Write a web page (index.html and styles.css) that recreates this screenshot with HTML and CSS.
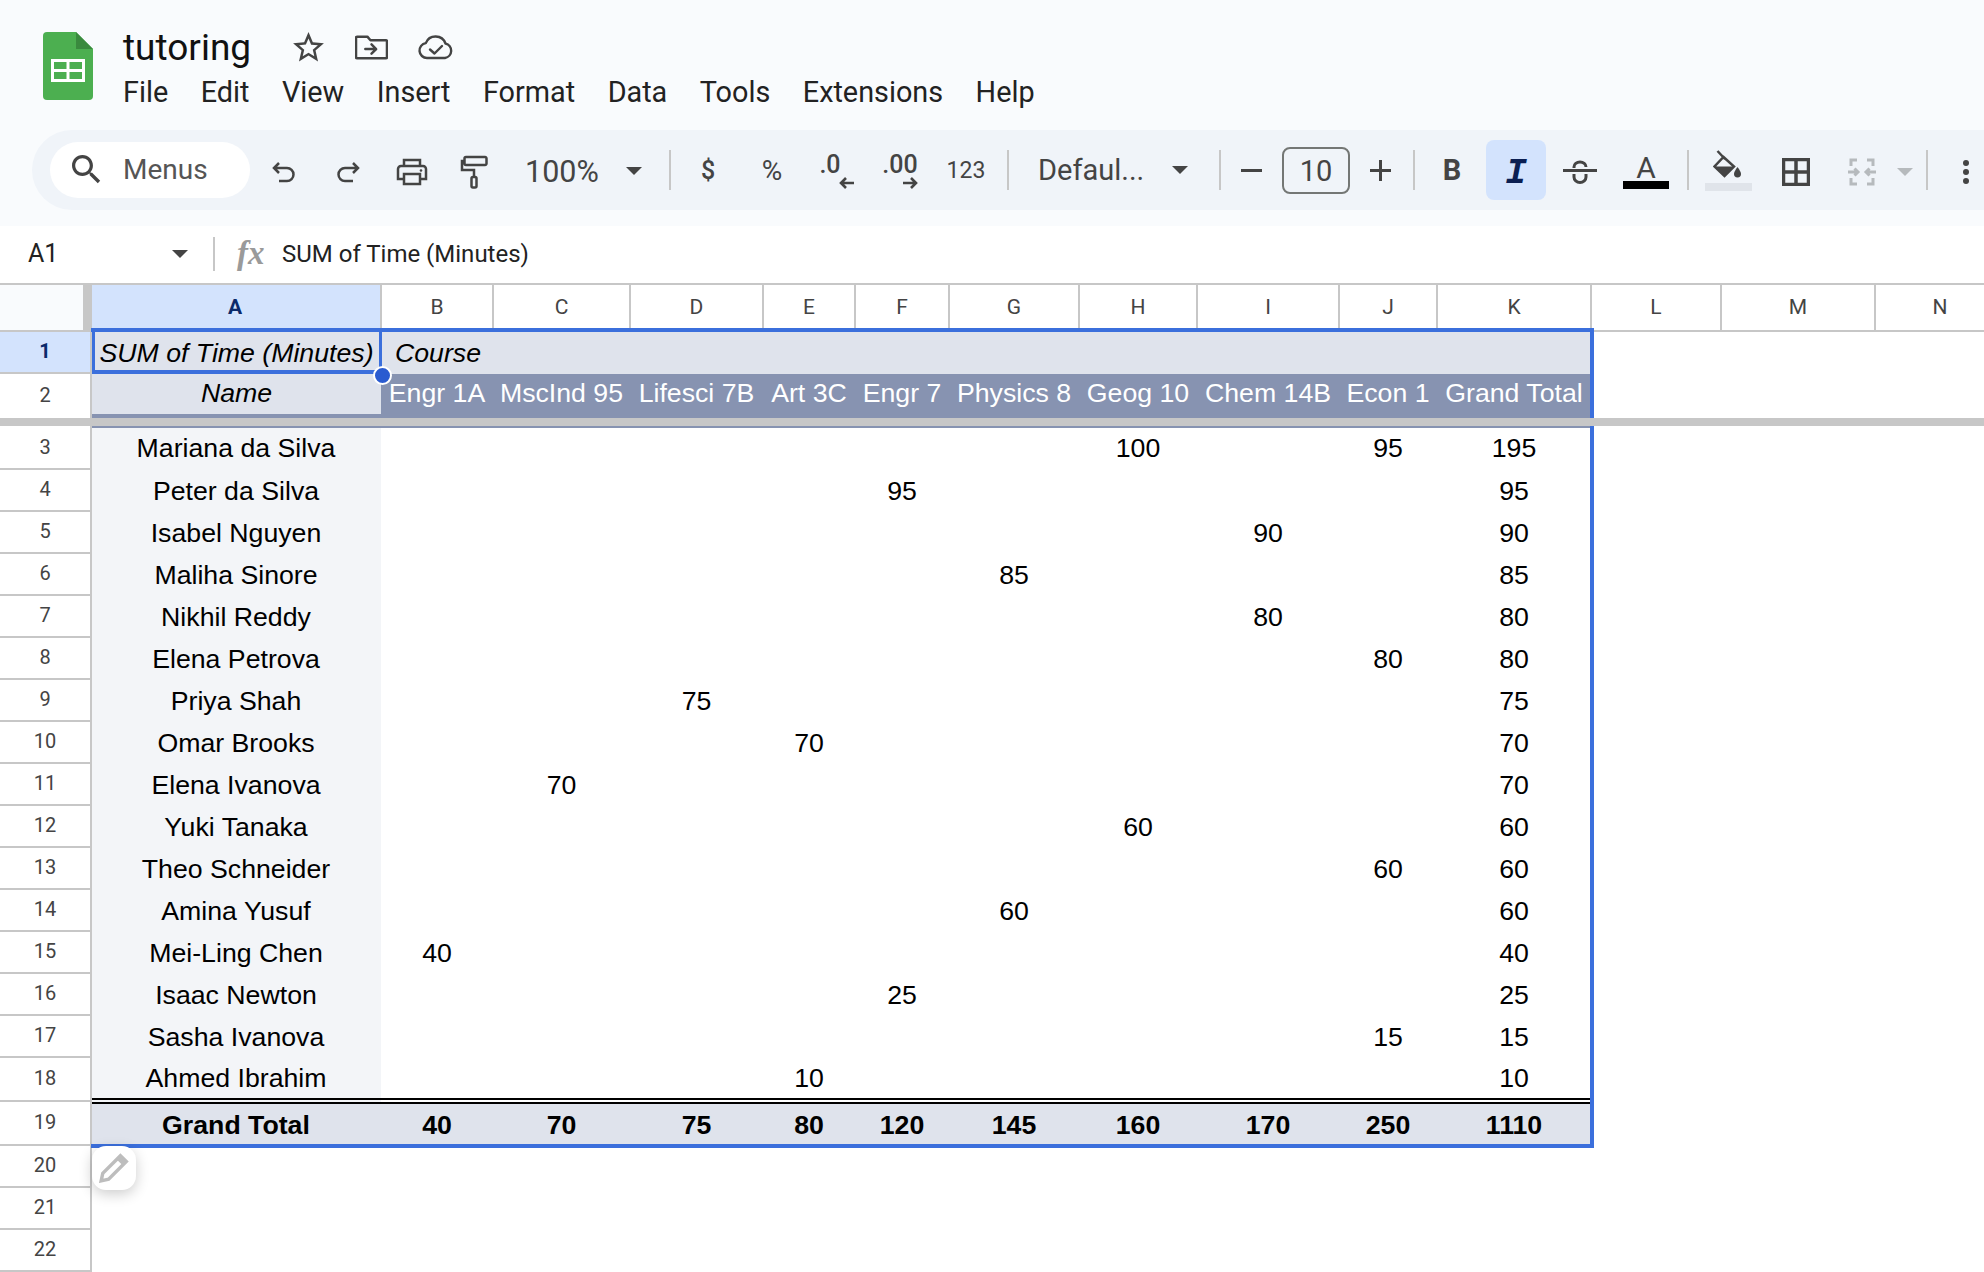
FILE: index.html
```html
<!DOCTYPE html>
<html lang="en">
<head>
<meta charset="UTF-8" />
<meta name="viewport" content="width=device-width, initial-scale=1" />
<title>tutoring - Google Sheets</title>
<link rel="stylesheet" href="styles.css">
</head>
<body>
  <div class="top">
  <header class="app-head">
    <svg class="logo" viewBox="0 0 50 68">
      <path d="M4 0H33L50 17V64a4 4 0 0 1-4 4H4a4 4 0 0 1-4-4V4a4 4 0 0 1 4-4z" fill="#4caf50"/>
      <path d="M33 0L50 17H33z" fill="#3a8a3e"/>
      <path d="M8 27H42V50H8z" fill="#fff"/>
      <path d="M11 30H23.500V37H11zM26.500 30H39V37H26.500zM11 40H23.500V47H11zM26.500 40H39V47H26.500z" fill="#4caf50"/>
    </svg>
    <div class="doc-info">
      <div class="doc-title">
        <span class="doc-name">tutoring</span>
        <svg class="star" viewBox="0 0 24 24"><path d="M22 9.240l-7.190-.62L12 2 9.190 8.630 2 9.240l5.460 4.730L5.820 21 12 17.270 18.180 21l-1.630-7.030L22 9.240zM12 15.400l-3.760 2.270 1-4.280-3.320-2.880 4.380-.38L12 6.100l1.710 4.040 4.380.38-3.320 2.880 1 4.280L12 15.400z"/></svg>
        <svg class="folder" viewBox="0 0 32 24"><path d="M2 22.500a1 1 0 0 1-1-1V2.500a1 1 0 0 1 1-1h10l3 3.500h15a1 1 0 0 1 1 1v15.500a1 1 0 0 1-1 1z"/><path d="M10 13.500h10M16 9l4.500 4.500L16 18"/></svg>
        <svg class="cloud" viewBox="0 0 36 24"><path d="M9 22.500a7.500 7.500 0 0 1-1.200-14.900A10.500 10.500 0 0 1 27.500 8a7.400 7.400 0 0 1-.5 14.500z"/><path d="M12 14l4.500 4 7.500-7.500"/></svg>
      </div>
      <nav class="menu">
        <span>File</span><span>Edit</span><span>View</span><span>Insert</span><span>Format</span><span>Data</span><span>Tools</span><span>Extensions</span><span>Help</span>
      </nav>
    </div>
  </header>

  <div class="toolbar">
    <div class="search">
      <svg viewBox="3 3 18 18"><path d="M15.500 14h-.79l-.28-.27C15.410 12.590 16 11.110 16 9.500 16 5.910 13.090 3 9.500 3S3 5.910 3 9.500 5.910 16 9.500 16c1.610 0 3.090-.59 4.230-1.570l.27.28v.79l5 4.990L20.490 19l-4.990-5zm-6 0C7.010 14 5 11.990 5 9.500S7.010 5 9.500 5 14 7.010 14 9.500 11.990 14 9.500 14z"/></svg>
      <span>Menus</span>
    </div>
    <div class="btn first"><svg class="ico" width="26" height="24" viewBox="0 0 26 24"><path d="M8 3L3 8l5 5M3 8h13a6.500 6.500 0 0 1 0 13H8"/></svg></div>
    <div class="btn"><svg class="ico" width="26" height="24" viewBox="0 0 26 24"><path d="M18 3l5 5-5 5M23 8H10a6.500 6.500 0 0 0 0 13h8"/></svg></div>
    <div class="btn"><svg class="ico" width="32" height="28" viewBox="0 0 32 28"><path d="M8 8V2h16v6M8 21H2V11a3 3 0 0 1 3-3h22a3 3 0 0 1 3 3v10h-6M8 16h16v10H8z"/><circle cx="25" cy="12.500" r="1.300" class="dot"/></svg></div>
    <div class="btn roller"><svg class="ico" width="28" height="34" viewBox="0 0 28 34"><path d="M6 2h19a1.500 1.500 0 0 1 1.500 1.500v5A1.500 1.500 0 0 1 25 10H6a1.500 1.500 0 0 1-1.500-1.500v-5A1.500 1.500 0 0 1 6 2zM4.500 6H2v9h12v6"/><rect x="11.500" y="22" width="5" height="10.500" rx="1.500"/></svg></div>
    <div class="zoom-box"><span>100%</span><i class="caret"></i></div>
    <div class="sep"></div>
    <div class="btn dollar"><span class="sym bold">$</span></div>
    <div class="btn"><span class="sym pct">%</span></div>
    <div class="btn">
      <span class="dec less">.0<svg class="arrow" viewBox="0 0 16 12"><path d="M15 6H2M7 1L2 6l5 5"/></svg></span>
    </div>
    <div class="btn">
      <span class="dec more">.00<svg class="arrow" viewBox="0 0 16 12"><path d="M1 6h13M9 1l5 5-5 5"/></svg></span>
    </div>
    <div class="btn fmt"><span class="sym small">123</span></div>
    <div class="sep"></div>
    <div class="font-box"><span>Defaul...</span><i class="caret"></i></div>
    <div class="sep"></div>
    <div class="step"><i class="minus"></i></div>
    <div class="size-box">10</div>
    <div class="step plus-wrap"><i class="minus"></i><i class="minus upright"></i></div>
    <div class="sep"></div>
    <div class="btn gap-b"><span class="letter-b">B</span></div>
    <div class="btn active"><span class="letter-i">I</span></div>
    <div class="btn"><svg class="ico strike" width="34" height="24" viewBox="0 0 34 24"><path d="M0 10.500h34M11 8V7a6 5 0 0 1 12 0M11 14v3a6 5.500 0 0 0 12 0v-3"/></svg></div>
    <div class="btn color-a"><span class="letter-a">A</span><i class="bar black"></i></div>
    <div class="sep sep-a"></div>
    <div class="fill-box">
      <svg viewBox="0 0 28 28"><path class="bucket" d="M10.500 7L21 16.500 11.500 26 1.500 16.500zM4.500 1L12 9"/><path d="M1.500 16.500H21L11.500 26z"/><path d="M24.500 17s-3.500 4.500-3.500 7a3.500 3.500 0 0 0 7 0c0-2.500-3.500-7-3.500-7z"/></svg>
      <i class="bar pale"></i>
    </div>
    <div class="btn borders"><svg class="ico heavy" width="28" height="28" viewBox="0 0 28 28"><path d="M1.500 1.500h25v25h-25zM14 1.500v25M1.500 14h25"/></svg></div>
    <div class="btn merge"><svg class="ico heavy off" width="30" height="28" viewBox="0 0 30 28"><path d="M10 2H4v6M20 2h6v6M10 26H4v-6M20 26h6v-6M1 14h10M7.500 10.500L11 14l-3.500 3.500M29 14H19M22.500 10.500L19 14l3.500 3.500"/></svg></div>
    <i class="caret off"></i>
    <div class="sep sep-m"></div>
    <div class="kebab"><i></i><i></i><i></i></div>
  </div>
  </div>

  <div class="formula-bar">
    <div class="name-box"><span>A1</span><i class="caret"></i></div>
    <div class="sep short"></div>
    <span class="fx">fx</span>
    <span class="formula">SUM of Time (Minutes)</span>
  </div>

  <div class="sheet">
    <table class="grid">
      <colgroup>
        <col class="c-head"><col class="c-a"><col class="c-b"><col class="c-c"><col class="c-d"><col class="c-e"><col class="c-f"><col class="c-g"><col class="c-h"><col class="c-i"><col class="c-j"><col class="c-k"><col class="c-l"><col class="c-m"><col class="c-n">
      </colgroup>
      <tr class="heads">
        <th class="corner"><i></i></th><th class="on">A</th><th>B</th><th>C</th><th>D</th><th>E</th><th>F</th><th>G</th><th>H</th><th>I</th><th>J</th><th>K</th><th>L</th><th>M</th><th>N</th>
      </tr>
      <tr class="r1">
        <th class="on">1</th><td class="pivot-key">SUM of Time (Minutes)</td><td class="course" colspan="10">Course</td><td class="plain" colspan="3"></td>
      </tr>
      <tr class="r2">
        <th>2</th><td class="pivot-name">Name</td><td>Engr 1A</td><td>MscInd 95</td><td>Lifesci 7B</td><td>Art 3C</td><td>Engr 7</td><td>Physics 8</td><td>Geog 10</td><td>Chem 14B</td><td>Econ 1</td><td>Grand Total</td><td class="plain" colspan="3"></td>
      </tr>
      <tr class="frozen"><td colspan="15"></td></tr>
      <tr class="r3"><th>3</th><td class="name">Mariana da Silva</td><td></td><td></td><td></td><td></td><td></td><td></td><td>100</td><td></td><td>95</td><td>195</td><td colspan="3"></td></tr>
      <tr><th>4</th><td class="name">Peter da Silva</td><td></td><td></td><td></td><td></td><td>95</td><td></td><td></td><td></td><td></td><td>95</td><td colspan="3"></td></tr>
      <tr><th>5</th><td class="name">Isabel Nguyen</td><td></td><td></td><td></td><td></td><td></td><td></td><td></td><td>90</td><td></td><td>90</td><td colspan="3"></td></tr>
      <tr><th>6</th><td class="name">Maliha Sinore</td><td></td><td></td><td></td><td></td><td></td><td>85</td><td></td><td></td><td></td><td>85</td><td colspan="3"></td></tr>
      <tr><th>7</th><td class="name">Nikhil Reddy</td><td></td><td></td><td></td><td></td><td></td><td></td><td></td><td>80</td><td></td><td>80</td><td colspan="3"></td></tr>
      <tr><th>8</th><td class="name">Elena Petrova</td><td></td><td></td><td></td><td></td><td></td><td></td><td></td><td></td><td>80</td><td>80</td><td colspan="3"></td></tr>
      <tr><th>9</th><td class="name">Priya Shah</td><td></td><td></td><td>75</td><td></td><td></td><td></td><td></td><td></td><td></td><td>75</td><td colspan="3"></td></tr>
      <tr><th>10</th><td class="name">Omar Brooks</td><td></td><td></td><td></td><td>70</td><td></td><td></td><td></td><td></td><td></td><td>70</td><td colspan="3"></td></tr>
      <tr><th>11</th><td class="name">Elena Ivanova</td><td></td><td>70</td><td></td><td></td><td></td><td></td><td></td><td></td><td></td><td>70</td><td colspan="3"></td></tr>
      <tr><th>12</th><td class="name">Yuki Tanaka</td><td></td><td></td><td></td><td></td><td></td><td></td><td>60</td><td></td><td></td><td>60</td><td colspan="3"></td></tr>
      <tr><th>13</th><td class="name">Theo Schneider</td><td></td><td></td><td></td><td></td><td></td><td></td><td></td><td></td><td>60</td><td>60</td><td colspan="3"></td></tr>
      <tr><th>14</th><td class="name">Amina Yusuf</td><td></td><td></td><td></td><td></td><td></td><td>60</td><td></td><td></td><td></td><td>60</td><td colspan="3"></td></tr>
      <tr><th>15</th><td class="name">Mei-Ling Chen</td><td>40</td><td></td><td></td><td></td><td></td><td></td><td></td><td></td><td></td><td>40</td><td colspan="3"></td></tr>
      <tr><th>16</th><td class="name">Isaac Newton</td><td></td><td></td><td></td><td></td><td>25</td><td></td><td></td><td></td><td></td><td>25</td><td colspan="3"></td></tr>
      <tr><th>17</th><td class="name">Sasha Ivanova</td><td></td><td></td><td></td><td></td><td></td><td></td><td></td><td></td><td>15</td><td>15</td><td colspan="3"></td></tr>
      <tr class="r18"><th>18</th><td class="name">Ahmed Ibrahim</td><td></td><td></td><td></td><td>10</td><td></td><td></td><td></td><td></td><td></td><td>10</td><td class="plain" colspan="3"></td></tr>
      <tr class="total">
        <th>19</th><td class="name-total">Grand Total</td><td>40</td><td>70</td><td>75</td><td>80</td><td>120</td><td>145</td><td>160</td><td>170</td><td>250</td><td>1110</td><td class="plain" colspan="3"></td>
      </tr>
      <tr><th>20</th><td colspan="14"></td></tr>
      <tr><th>21</th><td colspan="14"></td></tr>
      <tr><th>22</th><td colspan="14"></td></tr>
    </table>

    <!-- selection sits over the cells -->
    <div class="range"></div>
    <div class="active-cell"></div>
    <div class="handle"></div>
    <div class="pencil">
      <svg viewBox="0 0 28 28"><path d="M20 2.500l5.500 5.500L9 24.500l-7 1.500 1.500-7z" fill="none" stroke="#bdbdbd" stroke-width="3.200"/><path d="M20 2.500l5.500 5.500-3.500 3.500L16.500 6z" fill="#bdbdbd"/></svg>
    </div>
  </div>
</body>
</html>
```

FILE: styles.css
```css
* {
  box-sizing: border-box;
}
html, body {
  height: 100%;
}
body {
  margin: 0;
  background: #fff;
  font-family: Roboto, sans-serif;
  color: #444;
  overflow: hidden;
}
i {
  display: block;
}

/* top of the page */
.top {
  height: 226px;
  background: #f9fbfd;
}
.app-head {
  height: 130px;
  display: flex;
  padding: 32px 0 0 43px;
}
.logo {
  width: 50px;
  height: 68px;
  flex: none;
}
.doc-info {
  margin-left: 30px;
  margin-top: 1px;
}
.doc-title {
  display: flex;
  align-items: center;
  height: 36px;
  margin-top: -4px;
}
.doc-name {
  font-size: 37px;
  color: #111;
  width: 167px;
}
.star {
  width: 37px;
  height: 37px;
  fill: #444;
}
.folder, .cloud {
  fill: none;
  stroke: #444;
  stroke-width: 2.400;
  stroke-linejoin: round;
  stroke-linecap: round;
}
.folder {
  width: 33px;
  height: 25px;
  margin-left: 28px;
}
.cloud {
  width: 36px;
  height: 25px;
  margin-left: 30px;
}
.menu {
  display: flex;
  gap: 32.500px;
  margin-top: 9px;
  font-size: 28.800px;
  color: #222;
  line-height: 36px;
}

/* toolbar */
.toolbar {
  height: 80px;
  margin-left: 32px;
  padding-left: 18px;
  background: #f0f4f9;
  border-radius: 40px 0 0 40px;
  display: flex;
  align-items: center;
}
.search {
  width: 200px;
  height: 56px;
  flex: none;
  background: #fff;
  border-radius: 28px;
  display: flex;
  align-items: center;
  padding: 0 0 1px 22px;
  font-size: 28px;
  color: #555;
}
.search svg {
  width: 29px;
  height: 29px;
  fill: #444;
  margin-right: 22px;
}
.btn {
  width: 64px;
  height: 60px;
  flex: none;
  display: flex;
  align-items: center;
  justify-content: center;
  position: relative;
}
.btn.first {
  margin-left: 2px;
}
.btn.roller svg {
  margin-right: 4px;
}
.ico {
  fill: none;
  stroke: #444;
  stroke-width: 2.500;
  margin-top: 4px;
}
.ico.strike {
  stroke-width: 3;
}
.ico.heavy {
  stroke-width: 3.500;
  margin-top: 4px;
}
.ico.off {
  stroke: #b6babd;
  stroke-width: 3;
}
.ico .dot {
  fill: #444;
  stroke: none;
}
.sep {
  width: 2px;
  height: 40px;
  flex: none;
  background: #c7c7c7;
}
.caret {
  width: 0;
  height: 0;
  flex: none;
  border-left: 8px solid transparent;
  border-right: 8px solid transparent;
  border-top: 8px solid #444;
}
.caret.off {
  border-top-color: #b6babd;
  margin-left: 3px;
  margin-top: 4px;
}
.zoom-box {
  width: 161px;
  flex: none;
  display: flex;
  align-items: center;
  padding-left: 17px;
  font-size: 30.500px;
  margin-top: 2px;
}
.zoom-box .caret {
  margin-left: 27px;
  margin-top: -1px;
}
.btn.dollar {
  margin-left: 5px;
}
.sym {
  font-size: 25px;
}
.sym.bold {
  font-weight: 500;
}
.sym.pct {
  font-size: 28px;
}
.sym.small {
  font-size: 23px;
}
.btn.fmt {
  margin: 0 9px 0 2px;
}
.dec {
  position: relative;
  font-size: 25px;
  font-weight: 500;
  margin-top: -12px;
}
.dec.less {
  margin-left: -12px;
}
.dec.more {
  margin-left: 0;
}
.arrow {
  position: absolute;
  top: 27px;
  width: 16px;
  height: 12px;
  fill: none;
  stroke: #444;
  stroke-width: 2.600;
}
.dec.less .arrow {
  right: -14px;
}
.dec.more .arrow {
  right: 0;
}
.font-box {
  width: 210px;
  flex: none;
  display: flex;
  align-items: center;
  padding-left: 29px;
  font-size: 29px;
}
.font-box span {
  width: 134px;
}
.step {
  width: 61px;
  flex: none;
  height: 40px;
  display: flex;
  align-items: center;
  justify-content: center;
  position: relative;
}
.minus {
  width: 21px;
  height: 3px;
  background: #444;
}
.plus-wrap {
  width: 63px;
  padding-right: 3px;
}
.minus.upright {
  position: absolute;
  width: 3px;
  height: 21px;
}
.size-box {
  width: 68px;
  height: 47px;
  flex: none;
  border: 2px solid #747775;
  border-radius: 8px;
  font-size: 29px;
  text-align: center;
  line-height: 44px;
}
.btn.gap-b {
  margin-left: 5px;
}
.letter-b {
  font-size: 29px;
  font-weight: 700;
}
.btn.active {
  width: 60px;
  margin: 0 2px;
  background: #d3e3fd;
  border-radius: 8px;
}
.letter-i {
  font-family: "Liberation Mono", monospace;
  font-size: 36px;
  font-weight: 700;
  font-style: italic;
  color: #0b1f52;
  margin-top: 6px;
}
.btn.color-a {
  margin-left: 2px;
  flex-direction: column;
}
.letter-a {
  font-size: 30px;
  line-height: 26px;
  margin-top: 4px;
}
.bar {
  width: 46px;
  height: 8px;
}
.bar.black {
  background: #000;
}
.bar.pale {
  background: #e0e4ea;
  width: 47px;
  margin-top: 5px;
}
.sep-a {
  margin-left: 9px;
}
.fill-box {
  width: 47px;
  flex: none;
  margin-left: 16px;
  display: flex;
  flex-direction: column;
  align-items: center;
}
.fill-box svg {
  width: 28px;
  height: 28px;
  fill: #444;
  margin-right: 4px;
}
.fill-box .bucket {
  fill: none;
  stroke: #444;
  stroke-width: 2.500;
}
.btn.borders {
  margin-left: 12px;
}
.btn.merge {
  margin-left: 2px;
}
.sep-m {
  margin-left: 13px;
}
.kebab {
  width: 60px;
  flex: none;
  margin-left: 8px;
  display: flex;
  flex-direction: column;
  align-items: center;
  gap: 3px;
  margin-top: 4px;
}
.kebab i {
  width: 6px;
  height: 6px;
  border-radius: 50%;
  background: #444;
}

/* formula bar */
.formula-bar {
  height: 57px;
  background: #fff;
  display: flex;
  align-items: center;
  padding: 0 0 2px 28px;
  color: #222;
}
.name-box {
  width: 185px;
  flex: none;
  display: flex;
  align-items: center;
  font-size: 25px;
}
.name-box span {
  width: 144px;
}
.sep.short {
  height: 34px;
}
.fx {
  font-family: "Liberation Serif", serif;
  font-style: italic;
  font-weight: 700;
  font-size: 33px;
  color: #9a9a9a;
  width: 67px;
  padding-left: 22px;
  flex: none;
}
.formula {
  font-size: 24px;
}

/* sheet */
.sheet {
  position: relative;
  height: 989px;
  overflow: hidden;
}
.grid {
  table-layout: fixed;
  width: 2005px;
  border-collapse: separate;
  border-spacing: 0;
  font-family: "Liberation Sans", Arial, sans-serif;
  font-size: 26.700px;
  color: #000;
}
.c-head { width: 92px; }
.c-a { width: 289px; }
.c-b { width: 112px; }
.c-c { width: 137px; }
.c-d { width: 133px; }
.c-e { width: 92px; }
.c-f { width: 94px; }
.c-g { width: 130px; }
.c-h { width: 118px; }
.c-i { width: 142px; }
.c-j { width: 98px; }
.c-k { width: 154px; }
.c-l { width: 130px; }
.c-m { width: 154px; }
.c-n { width: 130px; }
.grid td, .grid th {
  padding: 0;
  text-align: center;
  white-space: nowrap;
  overflow: hidden;
}
.grid tr {
  height: 42px;
}
.grid th {
  font-family: Roboto, sans-serif;
  font-size: 20px;
  font-weight: 400;
  color: #444;
  padding-bottom: 3px;
  border-right: 2px solid #c7c7c7;
  border-bottom: 2px solid #c7c7c7;
}
.grid th.on {
  background: #d3e3fd;
  color: #0b2a6a;
  font-weight: 700;
}

.grid .heads {
  height: 49px;
}
.grid .heads th {
  border-top: 2px solid #c7c7c7;
  border-right: 1px solid #c7c7c7;
  border-left: 1px solid #c7c7c7;
  padding-bottom: 2px;
  font-size: 21px;
}
.grid .heads th.on {
  border-left: 0;
  padding-right: 2px;
}
.grid .heads th.corner {
  background: #f9fbfd;
  position: relative;
  border-left: 0;
  border-right: 0;
}
.corner i {
  position: absolute;
  top: 0;
  right: 0;
  bottom: 0;
  width: 9px;
  background: #c7c7c7;
}
.r1 td {
  background: #dfe3ec;
}
.grid td.pivot-key, .grid td.course {
  font-style: italic;
}
.grid td.course {
  text-align: left;
  padding-left: 14px;
}
.grid .r2 {
  height: 44px;
}
.grid .r2 th {
  border-bottom: 0;
  padding-bottom: 3px;
}
.r2 td {
  background: #8793b1;
  color: #fff;
  padding-bottom: 6px !important;
}
.grid td.pivot-name {
  background: #dfe3ec;
  color: #000;
  font-style: italic;
  padding-bottom: 2px !important;
  border-bottom: 4px solid #8793b1;
}
.grid td.plain {
  background: #fff;
  border: 0;
}
.grid .frozen {
  height: 8px;
  position: relative;
  z-index: 2;
}
.frozen td {
  background: #c7c7c7;
  font-size: 0;
  line-height: 0;
}
.grid .r3 {
  height: 44px;
}
.grid .r3 th {
  padding-bottom: 0;
}
.r3 td {
  border-top: 2px solid #8793b1;
  padding-bottom: 2px !important;
}
.r3 td:last-child {
  border-top: 0;
}
.grid td.name {
  background: #f3f5f8;
  padding-right: 1px;
}
.grid td.name-total {
  padding-right: 1px;
}
.grid .r18 {
  height: 46px;
}
.r18 td {
  border-bottom: 6px double #000;
}
.grid .r18 th {
  border-bottom: 0;
  padding-bottom: 6px;
  background: linear-gradient(#c7c7c7, #c7c7c7) 0 calc(100% - 2px) / 100% 2px no-repeat;
}
.total {
  font-weight: 700;
}
.total td {
  background: #dfe3ec;
}
.grid .total th {
  padding-bottom: 4px;
}

/* things that lie over the grid */
.range {
  position: absolute;
  left: 91px;
  top: 45px;
  width: 1503px;
  height: 820px;
  border: 4px solid #3b6fdc;
  border-left: 0;
  pointer-events: none;
}
.active-cell {
  position: absolute;
  left: 92px;
  top: 45px;
  width: 290px;
  height: 46px;
  border: 4px solid #3b6fdc;
  border-width: 4px 3px;
}
.handle {
  position: absolute;
  left: 373px;
  top: 83px;
  width: 19px;
  height: 19px;
  border-radius: 50%;
  background: #2a5bd0;
  border: 2px solid #fff;
}
.pencil {
  position: absolute;
  left: 92px;
  top: 863px;
  width: 44px;
  height: 44px;
  border-radius: 14px;
  background: #fff;
  box-shadow: 0 4px 14px rgba(0,0,0,0.2);
  display: flex;
  align-items: center;
  justify-content: center;
}
.pencil svg {
  width: 30px;
  height: 30px;
}
```
